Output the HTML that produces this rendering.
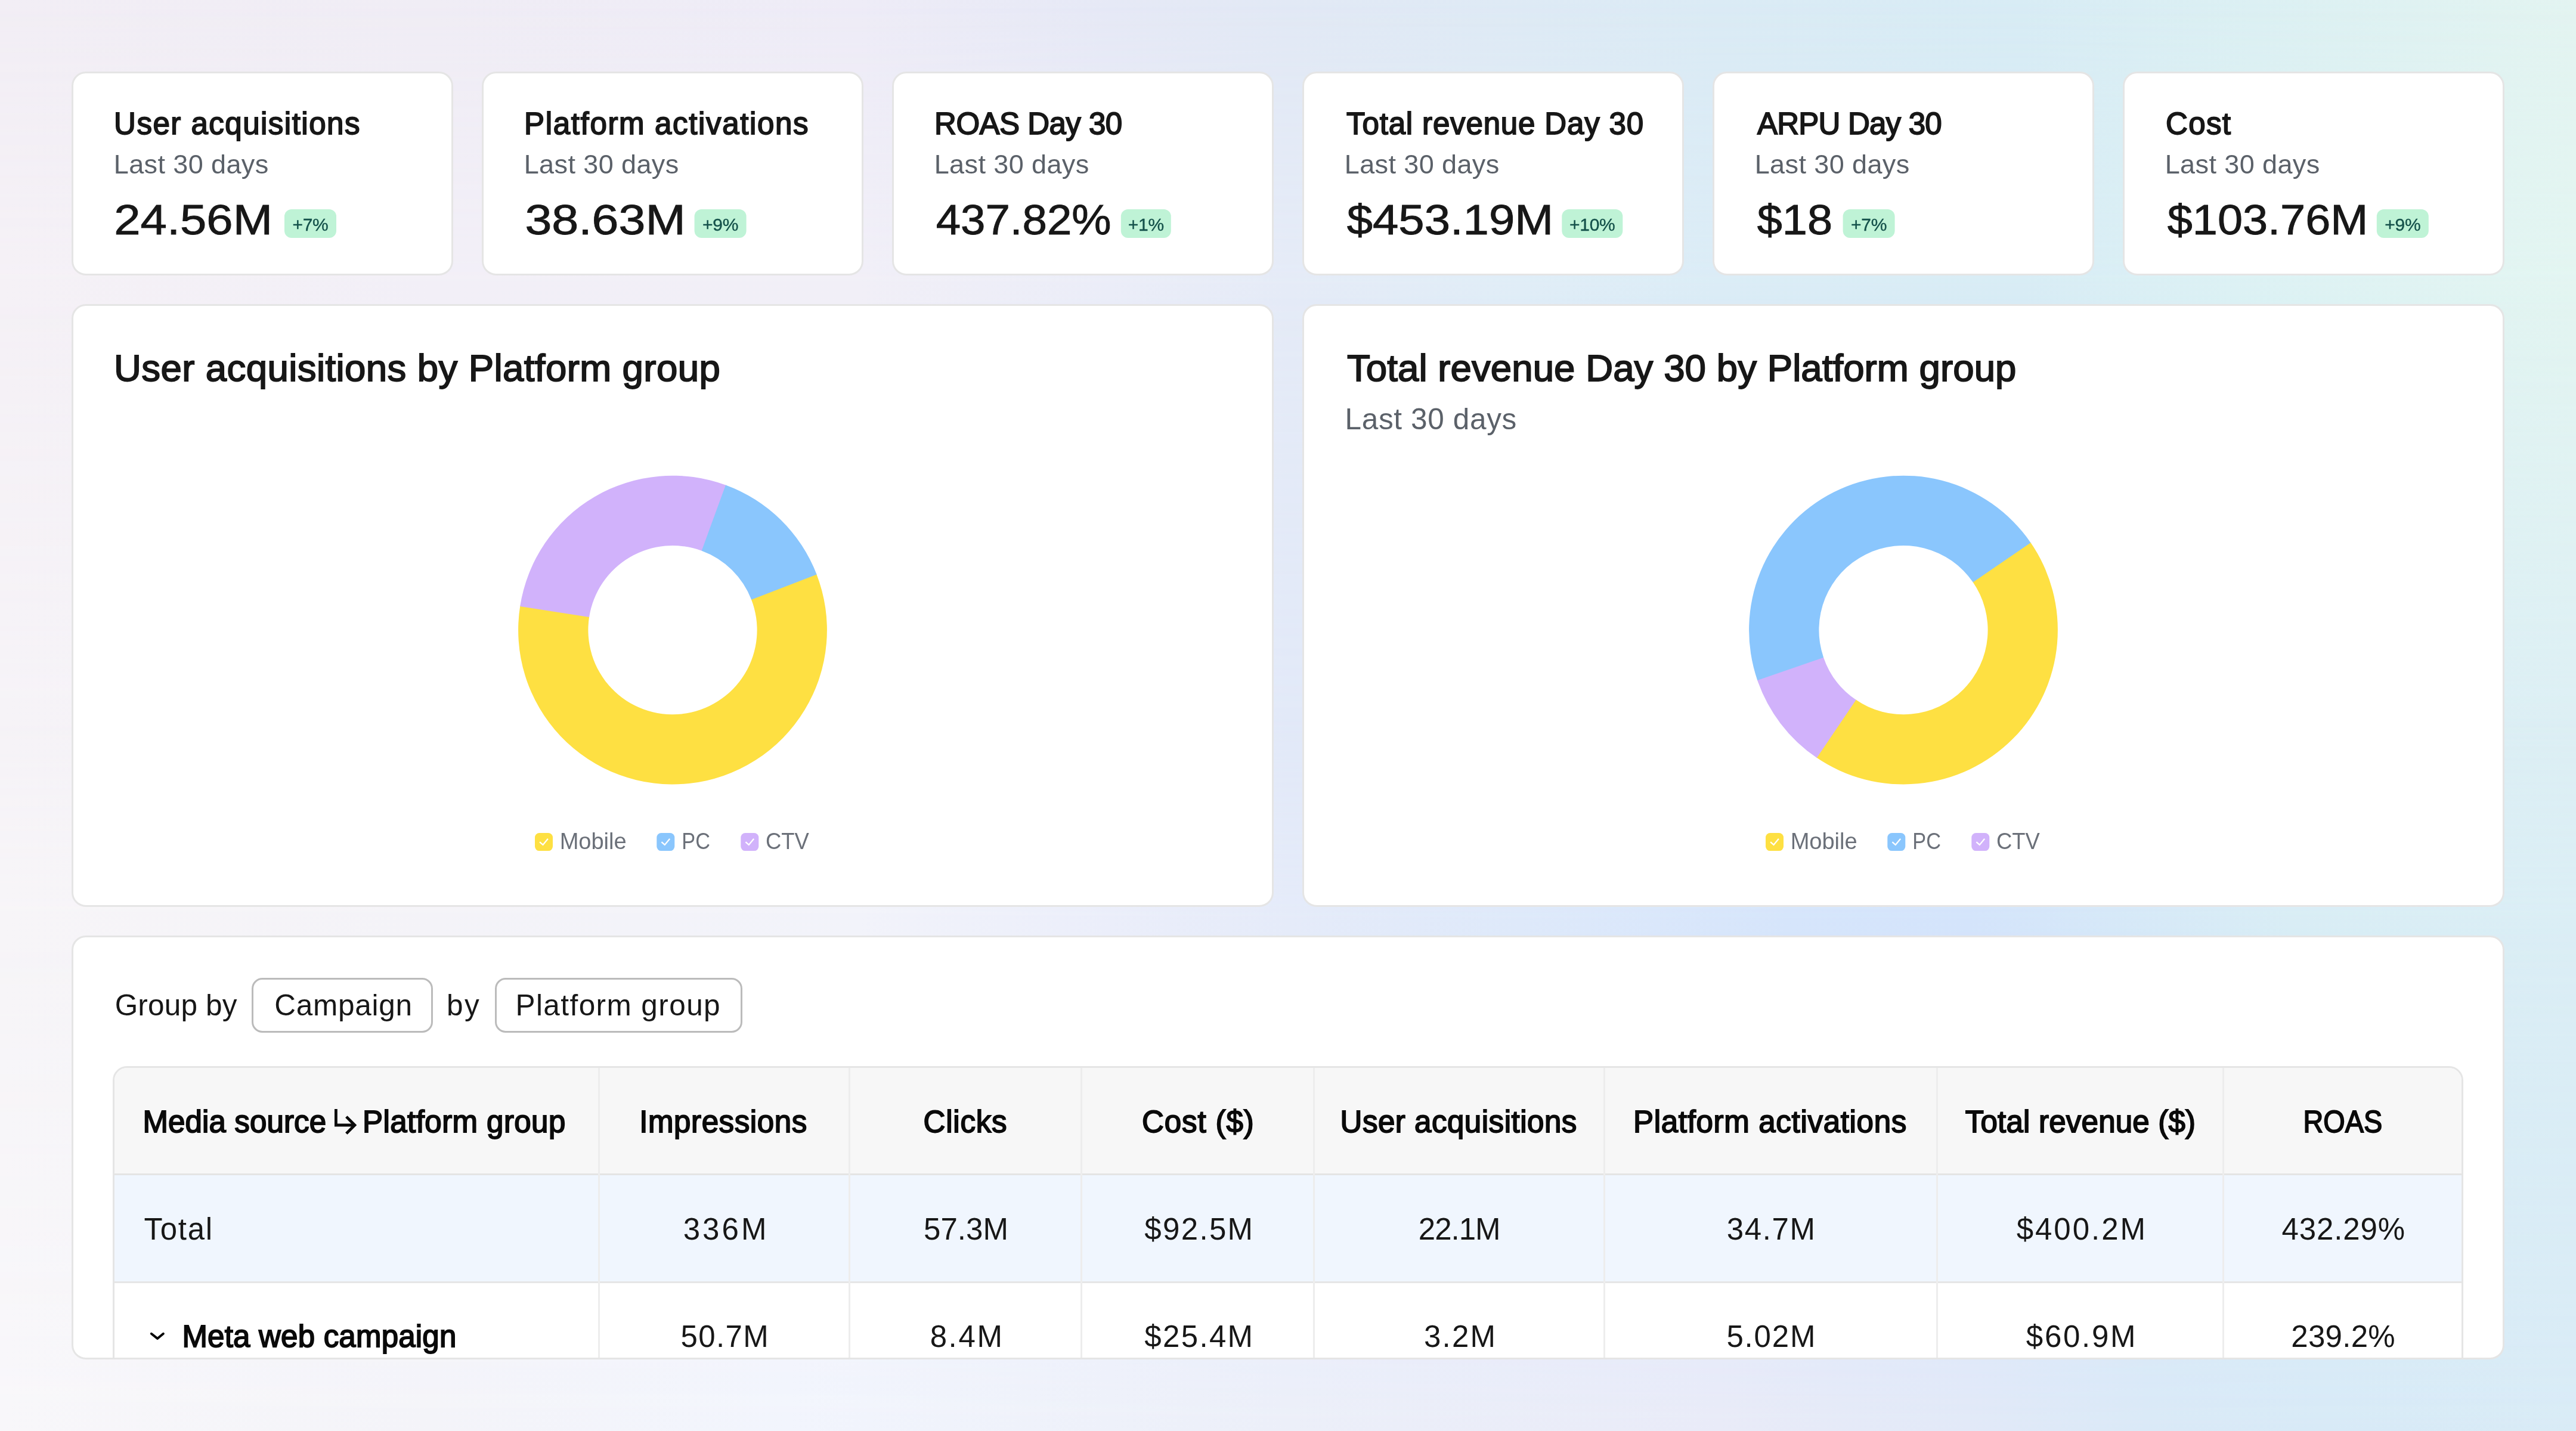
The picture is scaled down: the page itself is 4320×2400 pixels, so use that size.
<!DOCTYPE html>
<html><head><meta charset="utf-8"><title>Dashboard</title>
<style>
html,body{margin:0;padding:0}
html{overflow:hidden}
@media (min-width:2000px){html{zoom:2}}
@media (min-width:3500px){html{zoom:3}}
body{width:1440px;height:800px;position:relative;overflow:hidden;font-family:"Liberation Sans",sans-serif;color:#171717;background:#eef0f7}
.card{position:absolute;box-sizing:border-box;background:#fff;border:1px solid #e5e5e5;border-radius:8px}
.abs{position:absolute}
.bgl{position:absolute;left:0;top:0;width:1440px;height:800px}
.btn{position:absolute;box-sizing:border-box;border:1px solid #bbbbbb;border-radius:6px}
.tbl{position:absolute;box-sizing:border-box;border:1px solid #e5e5e5;border-radius:8px;overflow:hidden;background:#fff}
svg.ov{position:absolute;left:0;top:0;font-family:"Liberation Sans",sans-serif;will-change:transform}
</style></head><body>
<div class="bgl" style="background:linear-gradient(to right,#f2eef5 0px,#f0edf5 240px,#eeecf7 480px,#e6e9f6 620px,#e2e9f5 720px,#dbebf5 960px,#d8ecf5 1130px,#dcf0f3 1260px,#e3f4f1 1440px);"></div><div class="bgl" style="background:linear-gradient(to right,#f5f1f6 0px,#f2eff7 240px,#f1eff7 480px,#ebedf8 620px,#e5ebf7 720px,#e0edf7 850px,#dbecf6 960px,#d8ecf5 1130px,#dcf1f4 1250px,#e3f5f1 1440px);-webkit-mask-image:linear-gradient(to bottom,transparent 0px,#000 162px);mask-image:linear-gradient(to bottom,transparent 0px,#000 162px);"></div><div class="bgl" style="background:linear-gradient(to right,#f6f3f7 0px,#f3f1f8 240px,#f0f0f8 480px,#e2e9f8 720px,#d9e9f8 960px,#d7e9f6 1130px,#d9edf5 1250px,#ddeff4 1440px);-webkit-mask-image:linear-gradient(to bottom,transparent 162px,#000 400px);mask-image:linear-gradient(to bottom,transparent 162px,#000 400px);"></div><div class="bgl" style="background:linear-gradient(to right,#f7f5f8 0px,#f4f3f8 240px,#f2f3fa 480px,#ebeefa 620px,#e5ebf9 720px,#dee9fa 850px,#d6e5fb 1000px,#d4e4fb 1100px,#d6e8f8 1180px,#d9edf5 1280px,#dbeef5 1440px);-webkit-mask-image:linear-gradient(to bottom,transparent 400px,#000 515px);mask-image:linear-gradient(to bottom,transparent 400px,#000 515px);"></div><div class="bgl" style="background:linear-gradient(to right,#f8f7fa 0px,#f4f4f9 240px,#f2f5fd 440px,#eef1fa 620px,#eceff9 720px,#e9ebf8 960px,#e2e9f8 1100px,#dae9f7 1200px,#d8eaf7 1300px,#d9ebf6 1440px);-webkit-mask-image:linear-gradient(to bottom,transparent 515px,#000 800px);mask-image:linear-gradient(to bottom,transparent 515px,#000 800px);"></div>
<div class="card" style="left:40.000px;top:40px;width:213.333px;height:114px"></div><div class="card" style="left:269.333px;top:40px;width:213.333px;height:114px"></div><div class="card" style="left:498.667px;top:40px;width:213.333px;height:114px"></div><div class="card" style="left:728.000px;top:40px;width:213.333px;height:114px"></div><div class="card" style="left:957.333px;top:40px;width:213.333px;height:114px"></div><div class="card" style="left:1186.667px;top:40px;width:213.333px;height:114px"></div><div class="card" style="left:40px;top:170px;width:672px;height:337px"></div><div class="card" style="left:728px;top:170px;width:672px;height:337px"></div><div class="card" style="left:40px;top:523px;width:1360px;height:237px;overflow:hidden">
<div class="btn" style="left:99.60px;top:22.60px;width:101.4px;height:30.6px"></div>
<div class="btn" style="left:235.80px;top:22.60px;width:138.1px;height:30.6px"></div>
<div class="tbl" style="left:22.00px;top:72.00px;width:1314.00px;height:240px">
<div class="abs" style="left:0;top:0;right:0;height:59px;background:#f7f7f7"></div>
<div class="abs" style="left:0;top:59px;right:0;height:1px;background:#e4e4e4"></div>
<div class="abs" style="left:0;top:60px;right:0;height:59.3px;background:#f0f6fe"></div>
<div class="abs" style="left:0;top:119.3px;right:0;height:1px;background:#e6e6e6"></div>
<div class="abs" style="left:270.20px;top:0;width:1px;height:240px;background:#ededed"></div><div class="abs" style="left:410.30px;top:0;width:1px;height:240px;background:#ededed"></div><div class="abs" style="left:540.10px;top:0;width:1px;height:240px;background:#ededed"></div><div class="abs" style="left:670.00px;top:0;width:1px;height:240px;background:#ededed"></div><div class="abs" style="left:832.20px;top:0;width:1px;height:240px;background:#ededed"></div><div class="abs" style="left:1018.20px;top:0;width:1px;height:240px;background:#ededed"></div><div class="abs" style="left:1178.20px;top:0;width:1px;height:240px;background:#ededed"></div>
</div></div>
<svg class="ov" width="1440" height="800" viewBox="0 0 1440 800" fill="#171717">
<rect x="159.00" y="117" width="29.0" height="16" rx="4" fill="#bff3d6"/><text x="173.50" y="129.1" font-size="10" fill="#14514a" stroke="#14514a" stroke-width="0.12" letter-spacing="-0.1" text-anchor="middle">+7%</text><rect x="388.20" y="117" width="29.0" height="16" rx="4" fill="#bff3d6"/><text x="402.70" y="129.1" font-size="10" fill="#14514a" stroke="#14514a" stroke-width="0.12" letter-spacing="-0.1" text-anchor="middle">+9%</text><rect x="626.60" y="117" width="28.0" height="16" rx="4" fill="#bff3d6"/><text x="640.60" y="129.1" font-size="10" fill="#14514a" stroke="#14514a" stroke-width="0.12" letter-spacing="-0.1" text-anchor="middle">+1%</text><rect x="873.10" y="117" width="34.0" height="16" rx="4" fill="#bff3d6"/><text x="890.10" y="129.1" font-size="10" fill="#14514a" stroke="#14514a" stroke-width="0.12" letter-spacing="-0.1" text-anchor="middle">+10%</text><rect x="1030.20" y="117" width="29.0" height="16" rx="4" fill="#bff3d6"/><text x="1044.70" y="129.1" font-size="10" fill="#14514a" stroke="#14514a" stroke-width="0.12" letter-spacing="-0.1" text-anchor="middle">+7%</text><rect x="1328.60" y="117" width="29.0" height="16" rx="4" fill="#bff3d6"/><text x="1343.10" y="129.1" font-size="10" fill="#14514a" stroke="#14514a" stroke-width="0.12" letter-spacing="-0.1" text-anchor="middle">+9%</text>
<path fill="#fee042" d="M456.350 320.711A86.3 86.3 0 1 1 290.798 338.477L329.401 344.694A47.2 47.2 0 1 0 419.946 334.978Z"/><path fill="#d1b2fb" d="M290.716 338.997A86.3 86.3 0 0 1 406.152 271.339L392.491 307.975A47.2 47.2 0 0 0 329.356 344.979Z"/><path fill="#8ac6fd" d="M405.658 271.156A86.3 86.3 0 0 1 456.541 321.203L420.050 335.247A47.2 47.2 0 0 0 392.221 307.875Z"/><rect x="299.00" y="465.7" width="10" height="10" rx="2.5" fill="#fee042"/><path d="M301.70 470.7 L303.50 472.3 L306.30 468.9" fill="none" stroke="#fff" stroke-width="0.75" stroke-linecap="butt" stroke-linejoin="miter"/><rect x="367.10" y="465.7" width="10" height="10" rx="2.5" fill="#8ac6fd"/><path d="M369.80 470.7 L371.60 472.3 L374.40 468.9" fill="none" stroke="#fff" stroke-width="0.75" stroke-linecap="butt" stroke-linejoin="miter"/><rect x="414.10" y="465.7" width="10" height="10" rx="2.5" fill="#d1b2fb"/><path d="M416.80 470.7 L418.60 472.3 L421.40 468.9" fill="none" stroke="#fff" stroke-width="0.75" stroke-linecap="butt" stroke-linejoin="miter"/><path fill="#fee042" d="M1134.865 302.947A86.3 86.3 0 0 1 1015.181 423.365L1037.300 391.122A47.2 47.2 0 0 0 1102.758 325.262Z"/><path fill="#d1b2fb" d="M1015.617 423.662A86.3 86.3 0 0 1 982.232 379.798L1019.278 367.294A47.2 47.2 0 0 0 1037.538 391.284Z"/><path fill="#8ac6fd" d="M982.402 380.297A86.3 86.3 0 0 1 1135.165 303.381L1102.922 325.500A47.2 47.2 0 0 0 1019.372 367.567Z"/><rect x="987.00" y="465.7" width="10" height="10" rx="2.5" fill="#fee042"/><path d="M989.70 470.7 L991.50 472.3 L994.30 468.9" fill="none" stroke="#fff" stroke-width="0.75" stroke-linecap="butt" stroke-linejoin="miter"/><rect x="1055.10" y="465.7" width="10" height="10" rx="2.5" fill="#8ac6fd"/><path d="M1057.80 470.7 L1059.60 472.3 L1062.40 468.9" fill="none" stroke="#fff" stroke-width="0.75" stroke-linecap="butt" stroke-linejoin="miter"/><rect x="1102.10" y="465.7" width="10" height="10" rx="2.5" fill="#d1b2fb"/><path d="M1104.80 470.7 L1106.60 472.3 L1109.40 468.9" fill="none" stroke="#fff" stroke-width="0.75" stroke-linecap="butt" stroke-linejoin="miter"/>
<path d="M187.8 620.0 V629.0 H197.8 M193.6 624.3 L198.3 629.0 L193.6 633.7" fill="none" stroke="#0a0a0a" stroke-width="1.6" stroke-linejoin="miter"/><path d="M84.6 745.6 L88.0 748.3 L91.3 745.6" fill="none" stroke="#000" stroke-width="1.3" stroke-linecap="round" stroke-linejoin="round"/>
<text x="63.70" y="75.10" font-size="17" stroke="#171717" stroke-width="0.62" letter-spacing="0.500">User acquisitions</text>
<text x="63.57" y="96.90" font-size="15" fill="#5b6169" letter-spacing="0.133">Last 30 days</text>
<text transform="translate(63.75 131.10) scale(1.1451 1)" font-size="23.2" stroke="#171717" stroke-width="0.3">24.56M</text>
<text x="293.03" y="75.10" font-size="17" stroke="#171717" stroke-width="0.62" letter-spacing="0.553">Platform activations</text>
<text x="292.90" y="96.90" font-size="15" fill="#5b6169" letter-spacing="0.133">Last 30 days</text>
<text transform="translate(293.46 131.10) scale(1.1600 1)" font-size="23.2" stroke="#171717" stroke-width="0.3">38.63M</text>
<text x="522.37" y="75.10" font-size="17" stroke="#171717" stroke-width="0.62" letter-spacing="-0.173">ROAS Day 30</text>
<text x="522.23" y="96.90" font-size="15" fill="#5b6169" letter-spacing="0.133">Last 30 days</text>
<text transform="translate(523.21 131.10) scale(1.0699 1)" font-size="23.2" stroke="#171717" stroke-width="0.3">437.82%</text>
<text x="752.70" y="75.10" font-size="17" stroke="#171717" stroke-width="0.62" letter-spacing="0.282">Total revenue Day 30</text>
<text x="751.57" y="96.90" font-size="15" fill="#5b6169" letter-spacing="0.133">Last 30 days</text>
<text transform="translate(752.90 131.10) scale(1.1191 1)" font-size="23.2" stroke="#171717" stroke-width="0.3">$453.19M</text>
<text x="982.37" y="75.10" font-size="17" stroke="#171717" stroke-width="0.62" letter-spacing="-0.267">ARPU Day 30</text>
<text x="980.90" y="96.90" font-size="15" fill="#5b6169" letter-spacing="0.133">Last 30 days</text>
<text transform="translate(982.23 131.10) scale(1.0885 1)" font-size="23.2" stroke="#171717" stroke-width="0.3">$18</text>
<text x="1210.70" y="75.10" font-size="17" stroke="#171717" stroke-width="0.62" letter-spacing="0.444">Cost</text>
<text x="1210.23" y="96.90" font-size="15" fill="#5b6169" letter-spacing="0.133">Last 30 days</text>
<text transform="translate(1211.57 131.10) scale(1.0875 1)" font-size="23.2" stroke="#171717" stroke-width="0.3">$103.76M</text>
<text x="63.67" y="213.10" font-size="21.2" stroke="#171717" stroke-width="0.62" letter-spacing="0.127">User acquisitions by Platform group</text>
<text x="753.00" y="213.10" font-size="21.2" stroke="#171717" stroke-width="0.62" letter-spacing="0.017">Total revenue Day 30 by Platform group</text>
<text x="751.87" y="239.90" font-size="16.5" fill="#5b6169" letter-spacing="0.212">Last 30 days</text>
<text x="312.90" y="474.70" font-size="12.7" fill="#6b7079" letter-spacing="-0.020">Mobile</text>
<text transform="translate(381.10 474.70) scale(0.9000 1)" font-size="12.7" fill="#6b7079">PC</text>
<text transform="translate(427.96 474.70) scale(0.9568 1)" font-size="12.7" fill="#6b7079">CTV</text>
<text x="1000.90" y="474.70" font-size="12.7" fill="#6b7079" letter-spacing="-0.020">Mobile</text>
<text transform="translate(1069.10 474.70) scale(0.9000 1)" font-size="12.7" fill="#6b7079">PC</text>
<text transform="translate(1115.96 474.70) scale(0.9568 1)" font-size="12.7" fill="#6b7079">CTV</text>
<text x="64.23" y="567.80" font-size="16.5" letter-spacing="0.057">Group by</text>
<text x="153.43" y="567.80" font-size="16.5" letter-spacing="0.238">Campaign</text>
<text x="249.70" y="567.80" font-size="16.5" letter-spacing="0.767">by</text>
<text x="288.17" y="567.80" font-size="16.5" letter-spacing="0.474">Platform group</text>
<text x="79.80" y="633.00" font-size="17" stroke="#0a0a0a" stroke-width="0.62" fill="#0a0a0a" letter-spacing="0.048">Media source</text>
<text x="202.70" y="633.00" font-size="17" stroke="#0a0a0a" stroke-width="0.62" fill="#0a0a0a" letter-spacing="0.146">Platform group</text>
<text x="80.47" y="693.10" font-size="17" letter-spacing="0.583">Total</text>
<text x="101.80" y="753.10" font-size="17" stroke="#0a0a0a" stroke-width="0.62" fill="#0a0a0a" letter-spacing="0.073">Meta web campaign</text>
<text x="357.42" y="633.00" font-size="17" stroke="#0a0a0a" stroke-width="0.62" fill="#0a0a0a" letter-spacing="0.200">Impressions</text>
<text x="381.88" y="693.10" font-size="17" letter-spacing="1.356">336M</text>
<text x="380.53" y="753.10" font-size="17" letter-spacing="0.442">50.7M</text>
<text x="516.18" y="633.00" font-size="17" stroke="#0a0a0a" stroke-width="0.62" fill="#0a0a0a" letter-spacing="0.273">Clicks</text>
<text x="516.33" y="693.10" font-size="17" letter-spacing="0.017">57.3M</text>
<text x="519.88" y="753.10" font-size="17" letter-spacing="0.878">8.4M</text>
<text x="638.33" y="633.00" font-size="17" stroke="#0a0a0a" stroke-width="0.62" fill="#0a0a0a" letter-spacing="0.300">Cost ($)</text>
<text x="639.77" y="693.10" font-size="17" letter-spacing="0.780">$92.5M</text>
<text x="639.77" y="753.10" font-size="17" letter-spacing="0.780">$25.4M</text>
<text x="749.20" y="633.00" font-size="17" stroke="#0a0a0a" stroke-width="0.62" fill="#0a0a0a" letter-spacing="0.175">User acquisitions</text>
<text x="792.93" y="693.10" font-size="17" letter-spacing="-0.333">22.1M</text>
<text x="795.98" y="753.10" font-size="17" letter-spacing="0.744">3.2M</text>
<text x="913.00" y="633.00" font-size="17" stroke="#0a0a0a" stroke-width="0.62" fill="#0a0a0a" letter-spacing="0.232">Platform activations</text>
<text x="965.28" y="693.10" font-size="17" letter-spacing="0.542">34.7M</text>
<text x="965.13" y="753.10" font-size="17" letter-spacing="0.617">5.02M</text>
<text x="1098.60" y="633.00" font-size="17" stroke="#0a0a0a" stroke-width="0.62" fill="#0a0a0a" letter-spacing="0.075">Total revenue ($)</text>
<text x="1127.22" y="693.10" font-size="17" letter-spacing="0.994">$400.2M</text>
<text x="1132.62" y="753.10" font-size="17" letter-spacing="0.900">$60.9M</text>
<text transform="translate(1287.53 633.00) scale(0.9171 1)" font-size="17" stroke="#0a0a0a" stroke-width="0.62" fill="#0a0a0a">ROAS</text>
<text x="1275.47" y="693.10" font-size="17" letter-spacing="0.294">432.29%</text>
<text x="1280.78" y="753.10" font-size="17" letter-spacing="0.093">239.2%</text>

</svg>
</body></html>
